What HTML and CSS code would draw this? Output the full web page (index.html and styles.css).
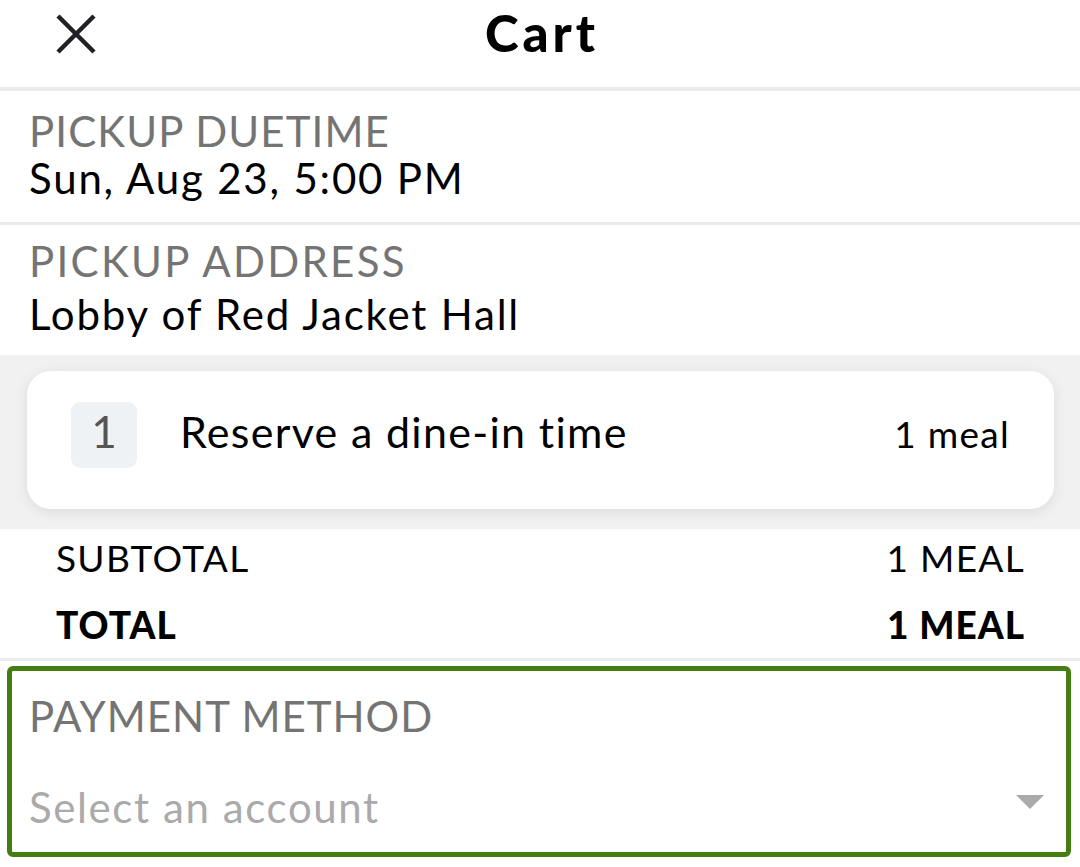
FILE: index.html
```html
<!DOCTYPE html>
<html>
<head>
<meta charset="utf-8">
<link rel="stylesheet" href="styles.css">
</head>
<body>
<div class="screen">
  <header class="topbar">
    <div class="close">
      <svg width="40" height="40" viewBox="0 0 40 40"><path d="M2 2 L38 38 M38 2 L2 38" stroke="#202124" stroke-width="4.5" fill="none"/></svg>
    </div>
    <h1 class="title">Cart</h1>
    <div></div>
  </header>
  <section class="info first">
    <div class="label">PICKUP DUETIME</div>
    <div class="value">Sun, Aug 23, 5:00 PM</div>
  </section>
  <section class="info second">
    <div class="label wide">PICKUP ADDRESS</div>
    <div class="value v2">Lobby of Red Jacket Hall</div>
  </section>
  <div class="items">
    <div class="card">
      <div class="qty">1</div>
      <div class="name">Reserve a dine-in time</div>
      <div class="meal">1 meal</div>
    </div>
  </div>
  <div class="totals">
    <div class="row sub"><span>SUBTOTAL</span><span>1 MEAL</span></div>
    <div class="row tot"><span>TOTAL</span><span>1 MEAL</span></div>
  </div>
  <div class="payment">
    <div class="label plabel">PAYMENT METHOD</div>
    <div class="select">
      <span class="placeholder">Select an account</span>
      <span class="caret"></span>
    </div>
  </div>
</div>
</body>
</html>
```
FILE: styles.css
```css
html, body { margin: 0; padding: 0; background: #fff; }
body { font-family: "Lato", "Noto Sans", sans-serif; color: #000; }
.screen { width: 1080px; height: 867px; overflow: hidden; }
.topbar {
  height: 87px;
  display: grid;
  grid-template-columns: 1fr auto 1fr;
  align-items: start;
  border-bottom: 4px solid #ebebeb;
}
.close { padding-left: 56px; padding-top: 14px; }
.close svg { display: block; }
.title {
  margin: 0; padding-top: 2px; font-size: 51px; font-weight: 900;
  line-height: 61px; letter-spacing: 4px; margin-right: -4px;
}
.info { padding-left: 29px; box-sizing: border-box; }
.info.first { height: 134px; border-bottom: 3px solid #ebebeb; padding-top: 17px; }
.info.second { height: 130px; padding-top: 13px; }
.label { font-size: 42px; color: #747474; line-height: 47px; letter-spacing: 1.1px; }
.label.wide { letter-spacing: 2.3px; }
.value { font-size: 42px; line-height: 47px; color: #000; letter-spacing: 1.8px; }
.value.v2 { margin-top: 6px; }
.items { background: #f1f1f1; padding: 16px 26px 20px 27px; }
.card {
  height: 138px; background: #fff; border-radius: 24px;
  box-shadow: 0 3px 14px rgba(0,0,0,0.09);
  display: flex; align-items: center; padding: 0 44px 0 44px; box-sizing: border-box;
}
.qty {
  width: 66px; height: 66px; border-radius: 9px; background: #eff2f5;
  color: #555; font-size: 44px; display: flex; align-items: center; justify-content: center;
  margin-top: -10px; padding-bottom: 8px; box-sizing: border-box;
}
.name { font-size: 43px; margin-left: 43px; flex: 1; margin-top: -17px; letter-spacing: 1.3px; }
.meal { font-size: 37px; margin-top: -13px; letter-spacing: 1.3px; }
.totals {
  padding: 0 55px 0 56px; height: 132px; box-sizing: border-box;
  border-bottom: 3px solid #ebebeb; display: flex; flex-direction: column; gap: 11px;
}
.row { display: flex; justify-content: space-between; font-size: 37px; height: 56px; align-items: center; letter-spacing: 1.3px; }
.row.tot { font-weight: 900; letter-spacing: 1px; }
.payment {
  margin: 5px 9px 0 7px; height: 191px; box-sizing: border-box;
  border: 5px solid #447d10; border-radius: 6px; padding: 22px 22px 0 17px;
}
.plabel { letter-spacing: 1px; }
.select { display: flex; align-items: center; justify-content: space-between; margin-top: 44px; }
.placeholder { font-size: 42px; color: #aaa; line-height: 47px; letter-spacing: 1.6px; }
.caret {
  width: 0; height: 0; border-left: 14px solid transparent; border-right: 14px solid transparent;
  border-top: 14px solid #aaa; margin-top: -12px;
}
```
